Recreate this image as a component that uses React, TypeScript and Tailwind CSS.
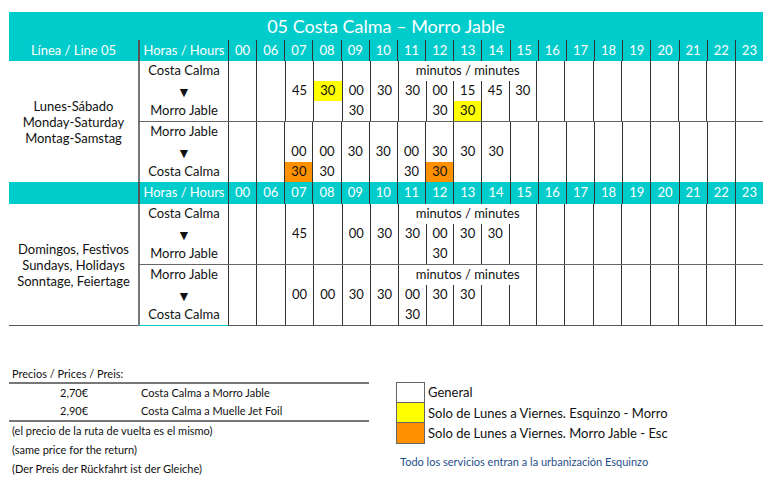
import React from 'react'

type Slot = { v: string; c?: 'y' | 'o' }
type Sub = {
  from: string
  to: string
  minutos: boolean
  cells: Record<string, [Slot | null, Slot | null]>
}

const hours = ['00', '06', '07', '08', '09', '10', '11', '12', '13', '14', '15', '16', '17', '18', '19', '20', '21', '22', '23']
const before = hours.slice(0, 6)
const mid = hours.slice(6, 11)
const after = hours.slice(11)

const s = (v: string, c?: 'y' | 'o'): Slot => ({ v, c })

const lunes: Sub[] = [
  {
    from: 'Costa Calma',
    to: 'Morro Jable',
    minutos: true,
    cells: {
      '07': [s('45'), null],
      '08': [s('30', 'y'), null],
      '09': [s('00'), s('30')],
      '10': [s('30'), null],
      '11': [s('30'), null],
      '12': [s('00'), s('30')],
      '13': [s('15'), s('30', 'y')],
      '14': [s('45'), null],
      '15': [s('30'), null],
    },
  },
  {
    from: 'Morro Jable',
    to: 'Costa Calma',
    minutos: false,
    cells: {
      '07': [s('00'), s('30', 'o')],
      '08': [s('00'), s('30')],
      '09': [s('30'), null],
      '10': [s('30'), null],
      '11': [s('00'), s('30')],
      '12': [s('30'), s('30', 'o')],
      '13': [s('30'), null],
      '14': [s('30'), null],
    },
  },
]

const domingos: Sub[] = [
  {
    from: 'Costa Calma',
    to: 'Morro Jable',
    minutos: true,
    cells: {
      '07': [s('45'), null],
      '09': [s('00'), null],
      '10': [s('30'), null],
      '11': [s('30'), null],
      '12': [s('00'), s('30')],
      '13': [s('30'), null],
      '14': [s('30'), null],
    },
  },
  {
    from: 'Morro Jable',
    to: 'Costa Calma',
    minutos: true,
    cells: {
      '07': [s('00'), null],
      '08': [s('00'), null],
      '09': [s('30'), null],
      '10': [s('30'), null],
      '11': [s('00'), s('30')],
      '12': [s('30'), null],
      '13': [s('30'), null],
    },
  },
]

const hl = { y: 'bg-[#ffff00]', o: 'bg-[#ff9000]' }

const Line = ({ slot }: { slot: Slot | null }) => (
  <div className={`h-5 flex items-center justify-center ${slot?.c ? hl[slot.c] : ''}`}>
    {slot?.v}
  </div>
)

const HourCol = ({ cell, top = true, edge = true }: { cell?: [Slot | null, Slot | null]; top?: boolean; edge?: boolean }) => (
  <div className={`flex-1 min-w-0 flex flex-col ${edge ? 'border-l border-[#333]' : ''}`}>
    {top && <div className="h-5" />}
    <Line slot={cell ? cell[0] : null} />
    <Line slot={cell ? cell[1] : null} />
  </div>
)

const SubRow = ({ sub, divider, tealEdge }: { sub: Sub; divider: boolean; tealEdge?: boolean }) => (
  <div className={`flex ${divider ? 'border-b border-[#666]' : ''}`}>
    <div className={`w-[90px] shrink-0 border-l-2 border-l-[#777] flex flex-col ${tealEdge ? 'border-b border-b-[#00cccc]' : ''}`}>
      <div className="h-5 flex items-center justify-center">{sub.from}</div>
      <div className="h-5 flex items-center justify-center text-[14px]">▼</div>
      <div className="h-5 flex items-center justify-center">{sub.to}</div>
    </div>
    <div className={`flex flex-1 ${tealEdge ? 'border-b border-[#555]' : ''}`}>
      {before.map(h => (
        <HourCol key={h} cell={sub.cells[h]} />
      ))}
      {sub.minutos ? (
        <div className="flex-[5] min-w-0 flex flex-col border-l border-[#333]">
          <div className="h-5 flex items-center justify-center whitespace-nowrap">minutos / minutes</div>
          <div className="flex">
            {mid.map((h, i) => (
              <HourCol key={h} cell={sub.cells[h]} top={false} edge={i > 0} />
            ))}
          </div>
        </div>
      ) : (
        mid.map(h => <HourCol key={h} cell={sub.cells[h]} />)
      )}
      {after.map(h => (
        <HourCol key={h} cell={sub.cells[h]} />
      ))}
    </div>
  </div>
)

const HeaderRow = ({ label, tall }: { label?: string; tall?: boolean }) => (
  <div className={`flex bg-[#00cccc] text-white ${tall ? 'h-[22px]' : 'h-[21px]'}`}>
    <div className="w-[129px] shrink-0 flex items-center justify-center">{label}</div>
    <div className="w-[90px] shrink-0 border-l-2 border-[#555] flex items-center justify-center">Horas / Hours</div>
    <div className="flex flex-1">
      {hours.map(h => (
        <div key={h} className="flex-1 min-w-0 border-l border-[#333] flex items-center justify-center">
          {h}
        </div>
      ))}
    </div>
  </div>
)

const Section = ({ label, subs, last }: { label: string[]; subs: Sub[]; last?: boolean }) => (
  <div className="flex">
    <div className={`w-[129px] shrink-0 flex flex-col items-center justify-center text-center leading-4 ${last ? 'border-b border-[#555]' : ''}`}>
      {label.map(l => (
        <p key={l}>{l}</p>
      ))}
    </div>
    <div className="flex-1 flex flex-col">
      {subs.map((sub, i) => (
        <SubRow key={i} sub={sub} divider={i === 0} tealEdge={last && i === subs.length - 1} />
      ))}
    </div>
  </div>
)

const App = () => {
  return (
    <div className="w-[768px] h-[493px] bg-white text-[#111] overflow-hidden" style={{ fontFamily: 'Lato, "Noto Sans", sans-serif' }}>
      <div className="ml-[9px] mt-[12px] w-[754px] text-[13px]">
        <div className="h-[28px] bg-[#00cccc] text-white text-[18px] flex items-center justify-center">
          05 Costa Calma – Morro Jable
        </div>
        <HeaderRow label="Línea / Line 05" />
        <Section label={['Lunes-Sábado', 'Monday-Saturday', 'Montag-Samstag']} subs={lunes} />
        <HeaderRow tall />
        <Section label={['Domingos, Festivos', 'Sundays, Holidays', 'Sonntage, Feiertage']} subs={domingos} last />
      </div>

      <div className="flex mt-[40px] ml-[9px]">
        <div className="w-[360px] shrink-0 text-[11px]">
          <div className="h-[18px] pl-[3px] flex items-center border-b-2 border-[#777]">Precios / Prices / Preis:</div>
          <div className="h-[19px] flex items-center">
            <span className="w-[132px] pl-[51px]">2,70€</span>
            <span>Costa Calma a Morro Jable</span>
          </div>
          <div className="h-[19px] flex items-center border-b-2 border-[#777]">
            <span className="w-[132px] pl-[51px]">2,90€</span>
            <span>Costa Calma a Muelle Jet Foil</span>
          </div>
          <div className="h-[19px] pl-[3px] flex items-center">(el precio de la ruta de vuelta es el mismo)</div>
          <div className="h-[19px] pl-[3px] flex items-center">(same price for the return)</div>
          <div className="h-[19px] pl-[3px] flex items-center">(Der Preis der Rückfahrt ist der Gleiche)</div>
        </div>

        <div className="ml-[27px] mt-[16px] flex flex-col">
          <div className="flex">
            <div className="w-[29px] shrink-0 flex flex-col border border-[#666]">
              <div className="h-5 bg-white border-b border-[#666]" />
              <div className="h-5 bg-[#ffff00] border-b border-[#666]" />
              <div className="h-5 bg-[#ff9000]" />
            </div>
            <div className="w-[251px] pl-[3px] whitespace-nowrap text-[13px]">
              <div className="h-[21px] flex items-center">General</div>
              <div className="h-[21px] flex items-center">Solo de Lunes a Viernes. Esquinzo - Morro</div>
              <div className="h-[20px] flex items-center">Solo de Lunes a Viernes. Morro Jable - Esc</div>
            </div>
          </div>
          <p className="mt-[10px] ml-[4px] text-[11px] text-[#1f4f8a]">Todo los servicios entran a la urbanización Esquinzo</p>
        </div>
      </div>
    </div>
  )
}

export default App
